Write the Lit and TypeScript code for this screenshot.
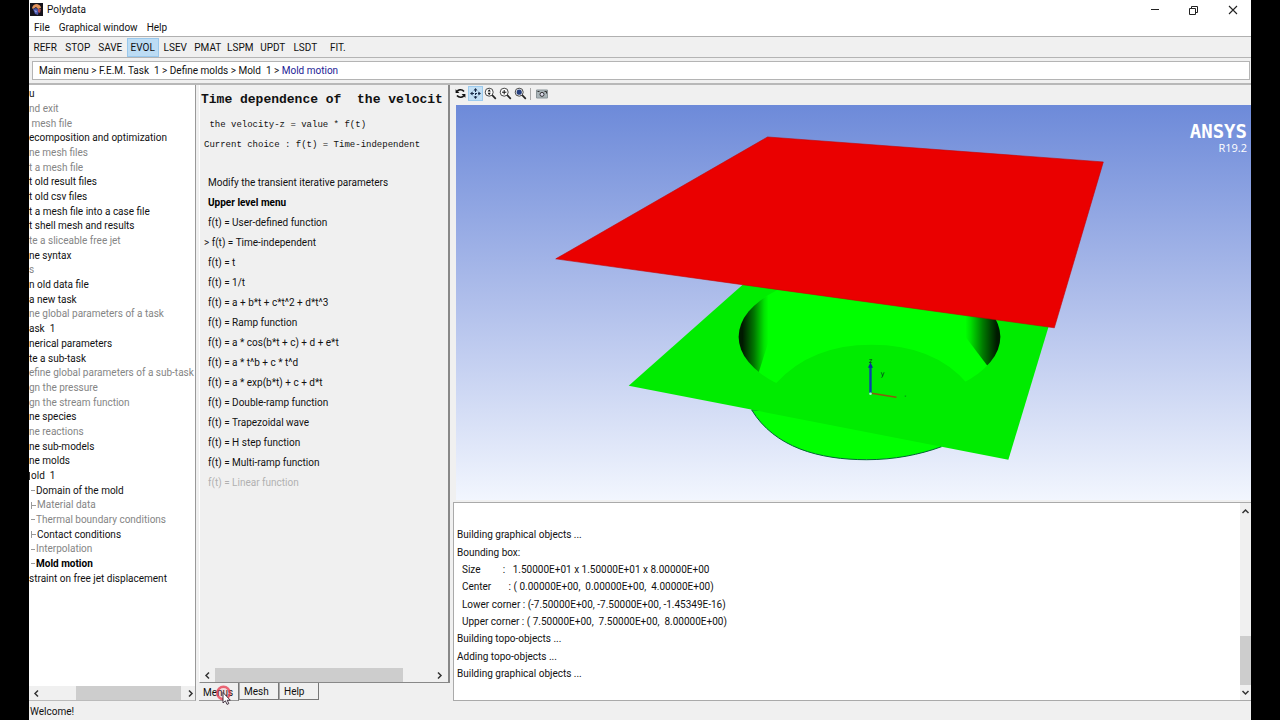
import { LitElement, html, svg, css } from "lit";
import { classMap } from "lit/directives/class-map.js";

type TreeRow = { text: string; off?: boolean; leaf?: boolean; box?: boolean; bold?: boolean; cut?: boolean };

const TOOLS = ["REFR", "STOP", "SAVE", "EVOL", "LSEV", "PMAT", "LSPM", "UPDT", "LSDT", "FIT."];

const TREE: TreeRow[] = [
  { text: "u" },
  { text: "nd exit", off: true },
  { text: " mesh file", off: true },
  { text: "ecomposition and optimization" },
  { text: "ne mesh files", off: true },
  { text: "t a mesh file", off: true },
  { text: "t old result files" },
  { text: "t old csv files" },
  { text: "t a mesh file into a case file" },
  { text: "t shell mesh and results" },
  { text: "te a sliceable free jet", off: true },
  { text: "ne syntax" },
  { text: "s", off: true },
  { text: "n old data file" },
  { text: "a new task" },
  { text: "ne global parameters of a task", off: true },
  { text: "ask  1" },
  { text: "nerical parameters" },
  { text: "te a sub-task" },
  { text: "efine global parameters of a sub-task", off: true },
  { text: "gn the pressure", off: true },
  { text: "gn the stream function", off: true },
  { text: "ne species" },
  { text: "ne reactions", off: true },
  { text: "ne sub-models" },
  { text: "ne molds" },
  { text: "old  1", cut: true },
  { text: "Domain of the mold", leaf: true },
  { text: "Material data", leaf: true, box: true, off: true },
  { text: "Thermal boundary conditions", leaf: true, off: true },
  { text: "Contact conditions", leaf: true, box: true },
  { text: "Interpolation", leaf: true, off: true },
  { text: "Mold motion", leaf: true, bold: true },
  { text: "straint on free jet displacement" },
];

const CHOICES = [
  "Modify the transient iterative parameters",
  "Upper level menu",
  "f(t) = User-defined function",
  "f(t) = Time-independent",
  "f(t) = t",
  "f(t) = 1/t",
  "f(t) = a + b*t + c*t^2 + d*t^3",
  "f(t) = Ramp function",
  "f(t) = a * cos(b*t + c) + d + e*t",
  "f(t) = a * t^b + c * t^d",
  "f(t) = a * exp(b*t) + c + d*t",
  "f(t) = Double-ramp function",
  "f(t) = Trapezoidal wave",
  "f(t) = H step function",
  "f(t) = Multi-ramp function",
  "f(t) = Linear function",
];

const LOG = [
  "Building graphical objects ...",
  "Bounding box:",
  "  Size         :   1.50000E+01 x 1.50000E+01 x 8.00000E+00",
  "  Center       : ( 0.00000E+00,  0.00000E+00,  4.00000E+00)",
  "  Lower corner : (-7.50000E+00, -7.50000E+00, -1.45349E-16)",
  "  Upper corner : ( 7.50000E+00,  7.50000E+00,  8.00000E+00)",
  "Building topo-objects ...",
  "Adding topo-objects ...",
  "Building graphical objects ...",
];

const chevron = (d: string) => html`<svg width="9" height="9" viewBox="0 0 9 9"><path d=${d} fill="none" stroke="#333" stroke-width="1.5"/></svg>`;
const LEFT = "M6 1.5L3 4.5L6 7.5";
const RIGHT = "M3 1.5L6 4.5L3 7.5";
const UP = "M1.5 6L4.5 3L7.5 6";
const DOWN = "M1.5 3L4.5 6L7.5 3";

const lens = (inner: unknown) => html`<svg width="13" height="13" viewBox="0 0 13 13">
  <circle cx="5.2" cy="5.2" r="4" fill="#fff" stroke="#444" stroke-width="1"/>
  <path d="M8.2 8.2L11.8 11.8" stroke="#222" stroke-width="1.7"/>${inner}</svg>`;

class AppRoot extends LitElement {
  static styles = css`
    :host { display: block; background: #000; font: 10px/14px Roboto, "Open Sans", sans-serif; color: #111; }
    * { box-sizing: border-box; }
    button { font: inherit; color: inherit; background: none; border: 0; padding: 0; margin: 0; white-space: pre; }
    svg { display: block; flex: none; }
    .window { display: flex; flex-direction: column; height: 100vh; margin: 0 29px; background: #f0f0f0; overflow: hidden; }
    .title { display: flex; align-items: center; height: 19px; gap: 4px; padding-left: 1px; background: #fff; }
    .title h1 { flex: 1; margin: 0; font: inherit; }
    .winbtns { display: flex; gap: 27px; padding-right: 12px; }
    .menubar { display: flex; gap: 9px; height: 18px; padding: 1px 5px 0; align-items: center; background: #fff; border-bottom: 1px solid #b0b0b0; }
    .toolbar { display: grid; grid-template-columns: repeat(10, 1fr); width: 325px; height: 20px; padding-top: 1px; }
    .toolbar button { text-align: center; }
    .toolbar .on { background: #bcdcf4; border: 1px solid #99c8ec; }
    .crumbs { padding: 3px 1px 3px 3px; border-top: 1px solid #b4b4b4; border-bottom: 2px solid #b8b8b8; }
    .crumbs nav { height: 19px; padding: 2px 6px; background: #fff; border: 1px solid #b4b4b4; white-space: pre; }
    .crumbs a { color: inherit; text-decoration: none; }
    .crumbs a.here { color: #1c1c96; }
    .main { flex: 1; min-height: 0; display: grid; grid-template-columns: 167px 251px minmax(0, 1fr); column-gap: 3px; }
    .tree { display: flex; flex-direction: column; justify-content: space-between; min-height: 0; background: #fff; border-right: 1px solid #999; border-bottom: 1px solid #bbb; overflow: hidden; }
    .tree ul { display: grid; grid-auto-rows: 1fr; height: 499px; margin: 2px 0 0; padding: 0; list-style: none; white-space: pre; }
    .tree li { display: flex; align-items: center; }
    .off { color: #858585; }
    .bold { font-weight: 700; color: #000; }
    .cut::before { content: ""; width: 1px; height: 8px; margin-right: 1px; background: #333; }
    .leaf::before { content: ""; width: 4px; height: 1px; margin: 0 1px 0 2px; background: #999; }
    .box::before { height: 7px; background: linear-gradient(#999, #999) 0 3px / 4px 1px no-repeat; border-left: 1px solid #999; }
    .hbar { display: flex; align-items: center; height: 14px; padding: 0 4px 0 3px; background: #f0f0f0; }
    .hbar .track { flex: 1; display: flex; align-self: stretch; padding: 0 5px 0 3px; }
    .hbar .thumb { background: #cdcdcd; }
    .tree .thumb { margin-left: 32px; width: 105px; }
    .mid { display: flex; flex-direction: column; min-height: 0; }
    .panel { flex: 1; min-height: 0; display: flex; flex-direction: column; border: solid #888; border-width: 0 2px 1px 0; border-left: 1px solid #fff; overflow: hidden; }
    .panel h2 { margin: 5px 0 0 1px; font: 700 13px/20px "Liberation Mono", monospace; white-space: pre; }
    .panel p { margin: 0 0 0 4px; font: 9px/20px "Liberation Mono", monospace; white-space: pre; }
    .panel .first { margin-top: 5px; }
    .choices { display: flex; flex-direction: column; align-items: flex-start; margin-top: 18px; flex: 1; }
    .choices button { height: 20px; padding-left: 8px; text-align: left; }
    .choices .current { padding-left: 4px; }
    .choices .faint { color: #b0b0b0; }
    .panel .thumb { width: 188px; }
    .tabs { display: flex; height: 18px; align-items: flex-start; }
    .tabs button { position: relative; width: 40px; height: 17px; padding: 1px 0 0 4px; text-align: left; border: 1px solid #777; border-top: 0; border-left-color: #aaa; }
    .tabs .active { height: 18px; padding-top: 2px; border-left: 0; border-bottom-color: #999; }
    .pointer { position: absolute; left: 16px; top: 1px; }
    .right { display: flex; flex-direction: column; min-width: 0; min-height: 0; }
    .gbar { display: flex; align-items: center; height: 20px; padding-bottom: 3px; }
    .gbar button { width: 15px; height: 15px; display: grid; place-items: center; }
    .gbar .on { background: #c4e0f5; border: 1px solid #9ccbee; }
    .gbar .rule { width: 1px; height: 12px; margin: 0 3px 0 2px; background: #aaa; }
    .view { position: relative; flex: 2 1 0; min-height: 0; margin: 0 0 2px 3px; background: linear-gradient(#6d8ad9, #b0bfeb 50%, #f2f6fe); overflow: hidden; }
    .view > svg { width: 100%; height: 100%; }
    .brand { position: absolute; right: 4px; top: 16px; color: #fff; text-align: right; font: 11px/12px "Open Sans", sans-serif; }
    .brand strong { display: block; font: 700 19px/21px "DejaVu Sans Mono", monospace; }
    .log { flex: 1 1 0; min-height: 0; display: flex; background: #fff; border: solid #aaa; border-width: 1px 0 1px 1px; }
    .log ol { flex: 1; display: grid; grid-auto-rows: 1fr; height: 156px; margin: 24px 0 0; padding: 0 0 0 3px; list-style: none; white-space: pre; }
    .log li { display: flex; align-items: center; }
    .vbar { display: flex; flex-direction: column; align-items: center; width: 11px; padding: 4px 0 3px; background: #f0f0f0; }
    .vbar .track { flex: 1; align-self: stretch; display: flex; flex-direction: column; justify-content: flex-end; }
    .vbar .thumb { height: 49px; margin-bottom: 3px; background: #cdcdcd; }
    .status { height: 19px; padding: 4px 1px 1px; }
  `;

  choice(text: string, i: number) {
    const current = i === 3;
    return html`<button class=${classMap({ current, bold: i === 1, faint: i === 15 })}>${current ? "> " : ""}${text}</button>`;
  }

  scene() {
    return svg`
      <defs>
        <linearGradient id="wl" gradientUnits="userSpaceOnUse" x1="740" y1="0" x2="769" y2="0">
          <stop offset="0.1" stop-color="#001a00"/><stop offset="0.5" stop-color="#007800"/><stop offset="0.85" stop-color="#00e400"/><stop offset="1" stop-color="#0f0"/>
        </linearGradient>
        <linearGradient id="wr" gradientUnits="userSpaceOnUse" x1="1001" y1="0" x2="966" y2="0">
          <stop offset="0.1" stop-color="#001a00"/><stop offset="0.5" stop-color="#007a00"/><stop offset="0.85" stop-color="#00e000"/><stop offset="1" stop-color="#0f0"/>
        </linearGradient>
        <clipPath id="hole"><ellipse cx="870" cy="337" rx="131" ry="66"/></clipPath>
      </defs>
      <path d="M752 410C775 448 820 460 867 460C895 460 920 455 942 447L900 420Z" fill="#0f0" stroke="#063" stroke-width="1"/>
      <path d="M629 386L760 270L1061 288L1009 460Z" fill="#00ec00"/>
      <g clip-path="url(#hole)">
        <path d="M730 270H1010V384H968Q935 345 872 345Q812 345 777 383H730Z" fill="#0f0"/>
        <path d="M738 280H769V342L758 376H738Z" fill="url(#wl)"/>
        <path d="M966 290H1003V366H988L966 337Z" fill="url(#wr)"/>
      </g>
      <path d="M768 137L1104 162L1055 328L556 259Z" fill="#ea0000" stroke="#c80000" stroke-width="0.6"/>
      <path d="M871 393V366" stroke="#0a3fae" stroke-width="2.4"/>
      <path d="M868.5 368L871 362.5L873.5 368Z" fill="#0a2f9a"/>
      <path d="M872 393.5L897 397.5" stroke="#8a5a10" stroke-width="1.6"/>
      <circle cx="871" cy="394" r="1.3" fill="#9fd"/>
      <g font-family="DejaVu Sans Mono, monospace" font-size="7" fill="#032"><text x="869" y="363">z</text><text x="881" y="376">y</text><text x="905" y="397" font-size="3">x</text></g>`;
  }

  render() {
    return html`
      <div class="window">
        <header class="title">
          <svg width="13" height="13" viewBox="0 0 13 13"><path d="M0 0H13V13H0Z" fill="#15131c"/><path d="M2 5Q3 1 7 1Q11 2 11 5L8 6L6 4L3 6Z" fill="#e0935e"/><path d="M3 6L6 5L9 7L8 12L5 11Z" fill="#4a55a8"/><path d="M8 6L11 6L10 10L8 9Z" fill="#b04a50"/><path d="M4 7L7 8L6 10Z" fill="#98a6e0"/></svg>
          <h1>Polydata</h1>
          <div class="winbtns">
            <button aria-label="Minimize"><svg width="12" height="12" viewBox="0 0 12 12"><path d="M2 5.5H10" stroke="#222"/></svg></button>
            <button aria-label="Restore"><svg width="12" height="12" viewBox="0 0 12 12"><path d="M1.5 4.5H7.5V10.5H1.5ZM3.5 4V2.5H9.5V8.5H8" fill="none" stroke="#222"/></svg></button>
            <button aria-label="Close"><svg width="12" height="12" viewBox="0 0 12 12"><path d="M2 2L10 10M10 2L2 10" stroke="#222" stroke-width="1.1"/></svg></button>
          </div>
        </header>
        <div class="menubar"><button>File</button><button>Graphical window</button><button>Help</button></div>
        <div class="toolbar">${TOOLS.map(t => html`<button class=${classMap({ on: t === "EVOL" })}>${t}</button>`)}</div>
        <div class="crumbs"><nav><a href="#">Main menu</a> &gt; <a href="#">F.E.M. Task  1</a> &gt; <a href="#">Define molds</a> &gt; <a href="#">Mold  1</a> &gt; <a href="#" class="here">Mold motion</a></nav></div>
        <main class="main">
          <section class="tree">
            <ul>${TREE.map(r => html`<li class=${classMap({ off: !!r.off, leaf: !!r.leaf, box: !!r.box, bold: !!r.bold, cut: !!r.cut })}>${r.text}</li>`)}</ul>
            <div class="hbar">${chevron(LEFT)}<div class="track"><div class="thumb"></div></div>${chevron(RIGHT)}</div>
          </section>
          <section class="mid">
            <div class="panel">
              <h2>Time dependence of  the velocit</h2>
              <p class="first"> the velocity-z = value * f(t)</p>
              <p>Current choice : f(t) = Time-independent</p>
              <div class="choices">${CHOICES.map((c, i) => this.choice(c, i))}</div>
              <div class="hbar">${chevron(LEFT)}<div class="track"><div class="thumb"></div></div>${chevron(RIGHT)}</div>
            </div>
            <div class="tabs">
              <button class="active">Menus<svg class="pointer" width="18" height="22" viewBox="0 0 18 22"><circle cx="8.5" cy="9" r="6.3" fill="#f0506020" stroke="#e8384c" stroke-opacity=".75" stroke-width="2.4"/><path d="M8 8.5V19L10.4 16.8L12 20.4L13.8 19.6L12.2 16.2H15.3Z" fill="#fff" stroke="#302030" stroke-width=".9"/></svg></button>
              <button>Mesh</button><button>Help</button>
            </div>
          </section>
          <section class="right">
            <div class="gbar">
              <button aria-label="Rotate"><svg width="11" height="11" viewBox="0 0 11 11"><path d="M9 3.6Q7.5 1.6 5 1.8Q3 2 2.2 3.4M2 7.4Q3.5 9.4 6 9.2Q8 9 8.8 7.6" fill="none" stroke="#111" stroke-width="1.6"/><path d="M.6 1.2V5H4.4ZM10.4 9.8V6H6.6Z" fill="#111"/></svg></button>
              <button class="on" aria-label="Pan"><svg width="11" height="11" viewBox="0 0 11 11"><path d="M5.5 0L7.5 2.6H3.5ZM5.5 11L7.5 8.4H3.5ZM0 5.5L2.6 3.5V7.5ZM11 5.5L8.4 3.5V7.5Z" fill="#1b2d4a"/><path d="M5.5 2V9M2 5.5H9" stroke="#1b2d4a" stroke-dasharray="2 1"/></svg></button>
              <button aria-label="Zoom">${lens(svg`<path d="M5.2 2.2L6.8 4.6H3.6ZM5.2 8.2L6.8 5.8H3.6Z" fill="#111"/>`)}</button>
              <button aria-label="Zoom box">${lens(svg`<path d="M5.2 3V7.4M3 5.2H7.4" stroke="#111"/>`)}</button>
              <button aria-label="Zoom fit">${lens(svg`<circle cx="5.2" cy="5.2" r="2.6" fill="#27407e"/>`)}</button>
              <span class="rule"></span>
              <button aria-label="Snapshot"><svg width="12" height="10" viewBox="0 0 12 10"><path d="M.5 1H11.5V9H.5Z" fill="#a9b4b8" stroke="#8a9498"/><circle cx="6" cy="5.4" r="2" fill="#dde" stroke="#333"/><path d="M1.5 2.5H3.5M8.5 2.5H10.5V4.5" fill="none" stroke="#333"/></svg></button>
            </div>
            <div class="view">
              <svg viewBox="457 105 794 395" role="img" aria-label="Mold geometry">${this.scene()}</svg>
              <div class="brand"><strong>ANSYS</strong>R19.2</div>
            </div>
            <div class="log">
              <ol>${LOG.map(l => html`<li>${l}</li>`)}</ol>
              <div class="vbar">${chevron(UP)}<div class="track"><div class="thumb"></div></div>${chevron(DOWN)}</div>
            </div>
          </section>
        </main>
        <footer class="status">Welcome!</footer>
      </div>`;
  }
}
customElements.define("app-root", AppRoot);
